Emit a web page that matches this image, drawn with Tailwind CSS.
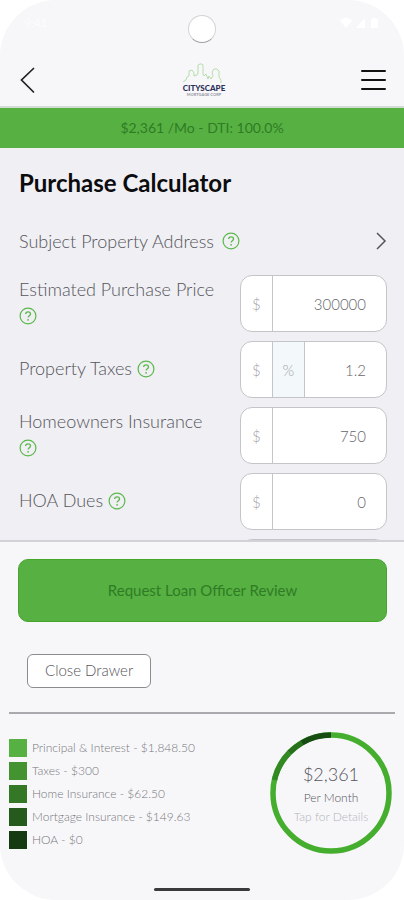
<!DOCTYPE html>
<html lang="en">
<head>
<meta charset="utf-8">
<meta name="viewport" content="width=device-width, initial-scale=1">
<title>Purchase Calculator</title>
<script src="https://cdn.jsdelivr.net/npm/@tailwindcss/browser@4"></script>
</head>
<body class="bg-white font-['Lato','Open_Sans',sans-serif] font-light text-[#55555a]">
<svg class="hidden" aria-hidden="true">
  <symbol id="help" viewBox="0 0 18 18">
    <circle cx="9" cy="9" r="7.9" fill="none" stroke="#5cb84c" stroke-width="1.2"/>
    <path d="M6.6 7.1c0-1.400 1-2.300 2.500-2.300s2.400.9 2.400 2.100c0 1.700-2.400 1.800-2.400 3.700" fill="none" stroke="#5cb84c" stroke-width="1.300"/>
    <circle cx="9.100" cy="12.800" r=".9" fill="#5cb84c"/>
  </symbol>
</svg>
<div class="flex h-screen flex-col overflow-hidden rounded-[56px] bg-[#f7f7fa]">
  <div class="grid h-[54px] shrink-0 grid-cols-3 items-center px-6 pb-2 text-white">
    <span class="text-xs">9:41</span>
    <span class="mt-3 size-7 justify-self-center rounded-full border border-[#d4d4d6] border-b-[#a0a0a2] bg-white"></span>
    <svg class="h-3 w-10 justify-self-end" viewBox="0 0 40 12" fill="currentColor" aria-hidden="true"><path d="M0 3.500Q6-2 12 3.500L6 11zM16 11 25 1v10zM31 2h2V1h3v1h2v9h-7z"/></svg>
  </div>
  <header class="grid h-[54px] shrink-0 grid-cols-3 items-center border-b-2 border-[#d5dcd6] px-4">
    <button aria-label="Back" class="justify-self-start"><svg class="h-7 w-6" viewBox="0 0 24 28" fill="none" stroke="#222" stroke-width="1.700" stroke-linecap="round"><path d="M17.500 2.500 5.500 14l12 12"/></svg></button>
    <svg class="h-9 w-12 justify-self-center" viewBox="0 0 44 36" role="img" aria-label="Cityscape">
      <path d="M3 20l3-2 1-3 2-1v-5l3-1 2 3v3l3-1 1-2V3l2-1h2l1 1v9l1 2 2-2 2 5 1-3 2 3 2-3-1-4 2-3h3l2 2v6l2 3v3" fill="none" stroke="#a5d79b" stroke-width=".8"/>
      <text x="24" y="29" text-anchor="middle" font-family="Lato" font-size="8" font-weight="900" fill="#2b3157">CITYSCAPE</text>
      <text x="24" y="34" text-anchor="middle" font-family="Lato" font-size="4" font-weight="700" fill="#92959f">MORTGAGE CORP</text>
    </svg>
    <button aria-label="Menu" class="justify-self-end"><svg class="h-6 w-7" viewBox="0 0 28 24" stroke="#111" stroke-width="2" stroke-linecap="round"><path d="M2 3h23M2 12h23M2 21h23"/></svg></button>
  </header>
  <div class="flex h-10 shrink-0 items-center justify-center bg-[#57b042] pb-px text-[14px] font-normal text-[#2f7c25]">$2,361 /Mo - DTI: 100.0%</div>
  <main class="min-h-0 flex-1 overflow-hidden bg-[#efeff4] pt-5 pr-[17px] pl-[19px] text-[18px] leading-[26px]">
    <h1 class="text-[24px] leading-[30px] font-bold text-[#0c0c0f]">Purchase Calculator</h1>
    <a href="#" class="mt-[30px] flex items-center justify-between">
      <span class="flex items-center gap-2">Subject Property Address<svg class="size-[18px]"><use href="#help"/></svg></span>
      <svg class="h-5 w-3" viewBox="0 0 12 20" fill="none" stroke="#55555a" stroke-width="1.500"><path d="M2 2l8 8-8 8"/></svg>
    </a>
    <form class="mt-[21px] flex flex-col gap-[9px]">
      <div class="flex h-[57px] items-center justify-between">
        <label for="price" class="w-[205px] pb-[3px]">Estimated Purchase Price <svg class="inline size-[18px] align-[-3px]"><use href="#help"/></svg></label>
        <div class="flex h-full w-2/5 overflow-hidden rounded-xl border border-[#c4c4c9] bg-white text-[15px]">
          <span class="flex w-8 shrink-0 items-center justify-center border-r border-[#c4c4c9] text-[#a5a5aa]">$</span>
          <input id="price" value="300000" class="w-0 flex-1 pr-5 text-right text-[#66666b]">
        </div>
      </div>
      <div class="flex h-[57px] items-center justify-between">
        <label for="taxes" class="w-[205px] pb-[3px]">Property Taxes <svg class="inline size-[18px] align-[-3px]"><use href="#help"/></svg></label>
        <div class="flex h-full w-2/5 overflow-hidden rounded-xl border border-[#c4c4c9] bg-white text-[15px]">
          <span class="flex w-8 shrink-0 items-center justify-center border-r border-[#c4c4c9] text-[#a5a5aa]">$</span>
          <span class="flex w-8 shrink-0 items-center justify-center border-r border-[#c4c4c9] bg-[#f3f8fa] text-[#a5a5aa]">%</span>
          <input id="taxes" value="1.2" class="w-0 flex-1 pr-5 text-right text-[#66666b]">
        </div>
      </div>
      <div class="flex h-[57px] items-center justify-between">
        <label for="insurance" class="w-[205px] pb-[3px]">Homeowners Insurance <svg class="inline size-[18px] align-[-3px]"><use href="#help"/></svg></label>
        <div class="flex h-full w-2/5 overflow-hidden rounded-xl border border-[#c4c4c9] bg-white text-[15px]">
          <span class="flex w-8 shrink-0 items-center justify-center border-r border-[#c4c4c9] text-[#a5a5aa]">$</span>
          <input id="insurance" value="750" class="w-0 flex-1 pr-5 text-right text-[#66666b]">
        </div>
      </div>
      <div class="flex h-[57px] items-center justify-between">
        <label for="hoa" class="w-[205px] pb-[3px]">HOA Dues <svg class="inline size-[18px] align-[-3px]"><use href="#help"/></svg></label>
        <div class="flex h-full w-2/5 overflow-hidden rounded-xl border border-[#c4c4c9] bg-white text-[15px]">
          <span class="flex w-8 shrink-0 items-center justify-center border-r border-[#c4c4c9] text-[#a5a5aa]">$</span>
          <input id="hoa" value="0" class="w-0 flex-1 pr-5 text-right text-[#66666b]">
        </div>
      </div>
      <div class="flex h-[57px] justify-end">
        <div class="flex h-full w-2/5 overflow-hidden rounded-xl border border-[#c4c4c9] bg-white">
          <span class="w-8 shrink-0 border-r border-[#c4c4c9]"></span>
          <span class="w-8 shrink-0 border-r border-[#c4c4c9] bg-[#f3f8fa]"></span>
        </div>
      </div>
    </form>
  </main>
  <section class="shrink-0 border-t-2 border-[#d3d3d7] px-[9px] pt-[17px]">
    <div class="pr-2 pl-[9px]">
      <button class="h-[63px] w-full rounded-[10px] border border-[#46a62c] bg-[#57b042] text-[15px] font-normal text-[#2f7c25]">Request Loan Officer Review</button>
      <button class="mt-8 ml-[9px] block h-[34px] rounded-md border border-[#8c8c90] bg-white px-[17px] pb-px text-[15px]">Close Drawer</button>
    </div>
    <div class="mt-6 flex items-center justify-between border-t-2 border-[#aaaaae] pt-[18px] pr-[3px]">
      <ul class="flex flex-col gap-[5px] pt-px text-[12px] leading-[18px] text-[#77777c]">
        <li class="flex items-center gap-[5px]"><span class="size-[18px] bg-[#57b042]"></span>Principal &amp; Interest - $1,848.50</li>
        <li class="flex items-center gap-[5px]"><span class="size-[18px] bg-[#439331]"></span>Taxes - $300</li>
        <li class="flex items-center gap-[5px]"><span class="size-[18px] bg-[#347827]"></span>Home Insurance - $62.50</li>
        <li class="flex items-center gap-[5px]"><span class="size-[18px] bg-[#245b1d]"></span>Mortgage Insurance - $149.63</li>
        <li class="flex items-center gap-[5px]"><span class="size-[18px] bg-[#153a12]"></span>HOA - $0</li>
      </ul>
      <button class="grid size-[122px] place-items-center">
        <svg class="col-start-1 row-start-1 size-full" viewBox="0 0 122 122" fill="none" stroke-width="5.500" aria-hidden="true">
          <circle cx="61" cy="61" r="58" stroke="#46ae2e"/>
          <path d="M4.500 48A58 58 0 0 1 19.500 20.500" stroke="#338a24"/>
          <path d="M19.500 20.500A58 58 0 0 1 32 10.800" stroke="#28701c"/>
          <path d="M32 10.800A58 58 0 0 1 61 3" stroke="#174d12"/>
        </svg>
        <span class="col-start-1 row-start-1 flex flex-col items-center">
          <span class="text-[18px] leading-7">$2,361</span>
          <span class="text-[12px] leading-5">Per Month</span>
          <span class="text-[12px] leading-[18px] text-[#b5b5b9]">Tap for Details</span>
        </span>
      </button>
    </div>
    <div class="mx-auto mt-[34px] mb-[9px] h-[3px] w-1/4 rounded-full bg-[#3a3a3c]"></div>
  </section>
</div>
</body>
</html>
